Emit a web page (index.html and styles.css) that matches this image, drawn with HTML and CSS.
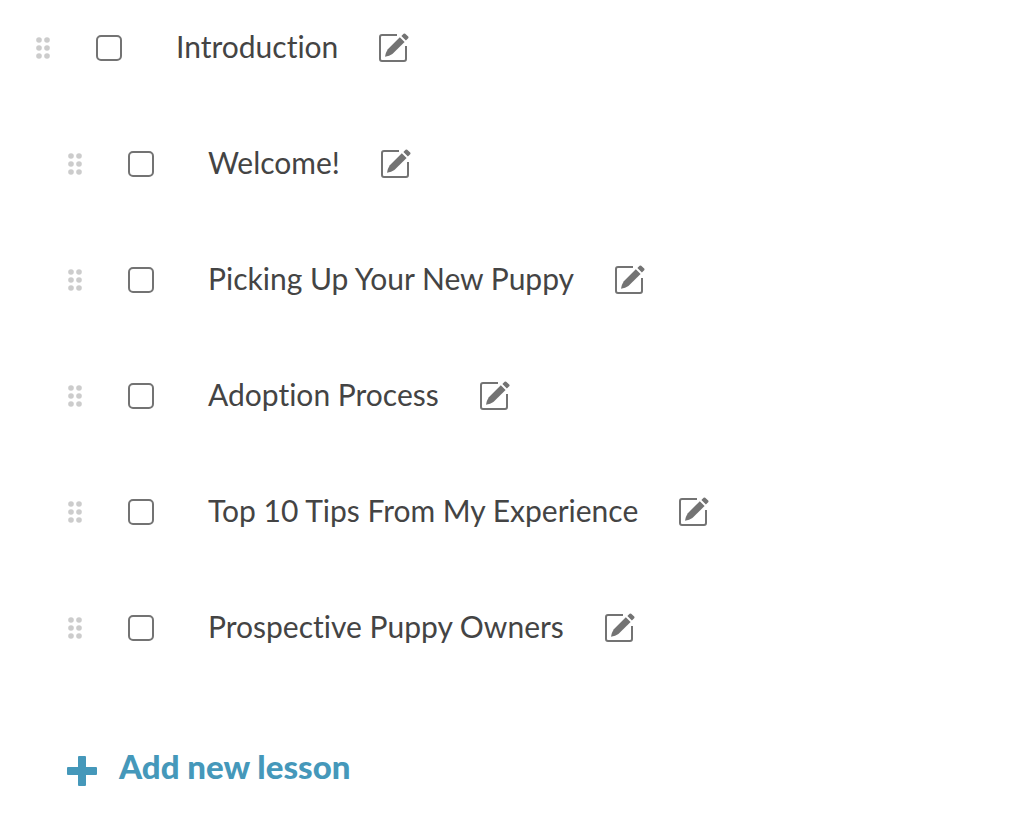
FILE: index.html
```html
<!DOCTYPE html>
<html lang="en">
<head>
    <meta charset="UTF-8">
    <meta name="viewport" content="width=device-width, initial-scale=1.0">
    <title>Lessons</title>
    <link rel="stylesheet" href="styles.css">
</head>
<body>
    <!-- shared icons -->
    <svg class="icon-defs" width="0" height="0" aria-hidden="true">
        <symbol id="icon-drag" viewBox="0 0 14 22">
            <circle cx="3" cy="3" r="2.8"/><circle cx="11" cy="3" r="2.8"/>
            <circle cx="3" cy="11" r="2.8"/><circle cx="11" cy="11" r="2.8"/>
            <circle cx="3" cy="19" r="2.8"/><circle cx="11" cy="19" r="2.8"/>
        </symbol>
        <symbol id="icon-edit" viewBox="0 0 30 30">
            <path d="M18 2H3Q1 2 1 4V26Q1 28 3 28H25Q27 28 27 26V13" fill="none" stroke="currentColor" stroke-width="2"/>
            <path d="M20.8 4.2L25.6 9L13.4 21Q10.4 23 6 23.8Q6.6 19.4 8.8 16.2Z"/>
            <path d="M22.4 3L24.6 .8Q25.4 0 26.2 .8L29.2 3.6Q30 4.4 29.2 5.2L26.9 7.5Z"/>
        </symbol>
    </svg>

    <main class="chapter">
        <div class="row">
            <button class="drag" type="button" aria-label="Reorder Introduction"><svg><use href="#icon-drag"/></svg></button>
            <input class="check" type="checkbox" id="chapter">
            <label class="title" for="chapter">Introduction</label>
            <button class="edit" type="button" aria-label="Edit Introduction"><svg><use href="#icon-edit"/></svg></button>
        </div>

        <ul class="lessons">
            <li class="row">
                <button class="drag" type="button" aria-label="Reorder Welcome!"><svg><use href="#icon-drag"/></svg></button>
                <input class="check" type="checkbox" id="lesson-1">
                <label class="title" for="lesson-1">Welcome!</label>
                <button class="edit" type="button" aria-label="Edit Welcome!"><svg><use href="#icon-edit"/></svg></button>
            </li>
            <li class="row">
                <button class="drag" type="button" aria-label="Reorder Picking Up Your New Puppy"><svg><use href="#icon-drag"/></svg></button>
                <input class="check" type="checkbox" id="lesson-2">
                <label class="title" for="lesson-2">Picking Up Your New Puppy</label>
                <button class="edit" type="button" aria-label="Edit Picking Up Your New Puppy"><svg><use href="#icon-edit"/></svg></button>
            </li>
            <li class="row">
                <button class="drag" type="button" aria-label="Reorder Adoption Process"><svg><use href="#icon-drag"/></svg></button>
                <input class="check" type="checkbox" id="lesson-3">
                <label class="title" for="lesson-3">Adoption Process</label>
                <button class="edit" type="button" aria-label="Edit Adoption Process"><svg><use href="#icon-edit"/></svg></button>
            </li>
            <li class="row">
                <button class="drag" type="button" aria-label="Reorder Top 10 Tips From My Experience"><svg><use href="#icon-drag"/></svg></button>
                <input class="check" type="checkbox" id="lesson-4">
                <label class="title" for="lesson-4">Top 10 Tips From My Experience</label>
                <button class="edit" type="button" aria-label="Edit Top 10 Tips From My Experience"><svg><use href="#icon-edit"/></svg></button>
            </li>
            <li class="row">
                <button class="drag" type="button" aria-label="Reorder Prospective Puppy Owners"><svg><use href="#icon-drag"/></svg></button>
                <input class="check" type="checkbox" id="lesson-5">
                <label class="title" for="lesson-5">Prospective Puppy Owners</label>
                <button class="edit" type="button" aria-label="Edit Prospective Puppy Owners"><svg><use href="#icon-edit"/></svg></button>
            </li>
        </ul>

        <button class="add" type="button">
            <svg viewBox="0 0 30 30" aria-hidden="true"><path d="M12 0H18Q19 0 19 1V11H29Q30 11 30 12V18Q30 19 29 19H19V29Q19 30 18 30H12Q11 30 11 29V19H1Q0 19 0 18V12Q0 11 1 11H11V1Q11 0 12 0Z"/></svg>
            <span class="add-label">Add new lesson</span>
        </button>
    </main>
</body>
</html>
```
FILE: styles.css
```css
:root {
    --text: #444444;
    --icon: #737373;
    --handle: #cccccc;
    --accent: #4598ba;
}

* {
    margin: 0;
    padding: 0;
    box-sizing: border-box;
}

body {
    background-color: #ffffff;
    color: var(--text);
    font-family: Lato, sans-serif;
    font-size: 30px;
    font-variant-ligatures: none;
    line-height: 36px;
}

button {
    background: none;
    border: none;
    color: inherit;
    font: inherit;
    cursor: pointer;
}

svg {
    display: block;
    fill: currentColor;
}

.icon-defs {
    position: absolute;
}

.chapter {
    padding: 30px 36px;
}

.row {
    display: flex;
    align-items: center;
    height: 36px;
}

.lessons {
    display: flex;
    flex-direction: column;
    gap: 80px;
    margin-top: 80px;
    padding-left: 32px;
    list-style: none;
}

.drag {
    flex: none;
    margin-right: 46px;
    color: var(--handle);
    cursor: grab;
}

.drag svg {
    width: 14px;
    height: 22px;
}

.check {
    flex: none;
    appearance: none;
    width: 26px;
    height: 26px;
    margin-right: 54px;
    border: 2px solid var(--icon);
    border-radius: 5px;
    background-color: #ffffff;
}

.check:checked {
    background-color: var(--accent);
}

.title,
.add-label {
    padding-bottom: 4px;
}

.edit {
    flex: none;
    margin-left: 41px;
    color: var(--icon);
}

.edit svg {
    width: 30px;
    height: 30px;
}

.add {
    display: flex;
    align-items: center;
    gap: 22px;
    margin-top: 102px;
    margin-left: 31px;
    color: var(--accent);
    font-size: 33px;
    font-weight: 900;
}

.add svg {
    width: 30px;
    height: 30px;
    margin-top: 6px;
}
```
